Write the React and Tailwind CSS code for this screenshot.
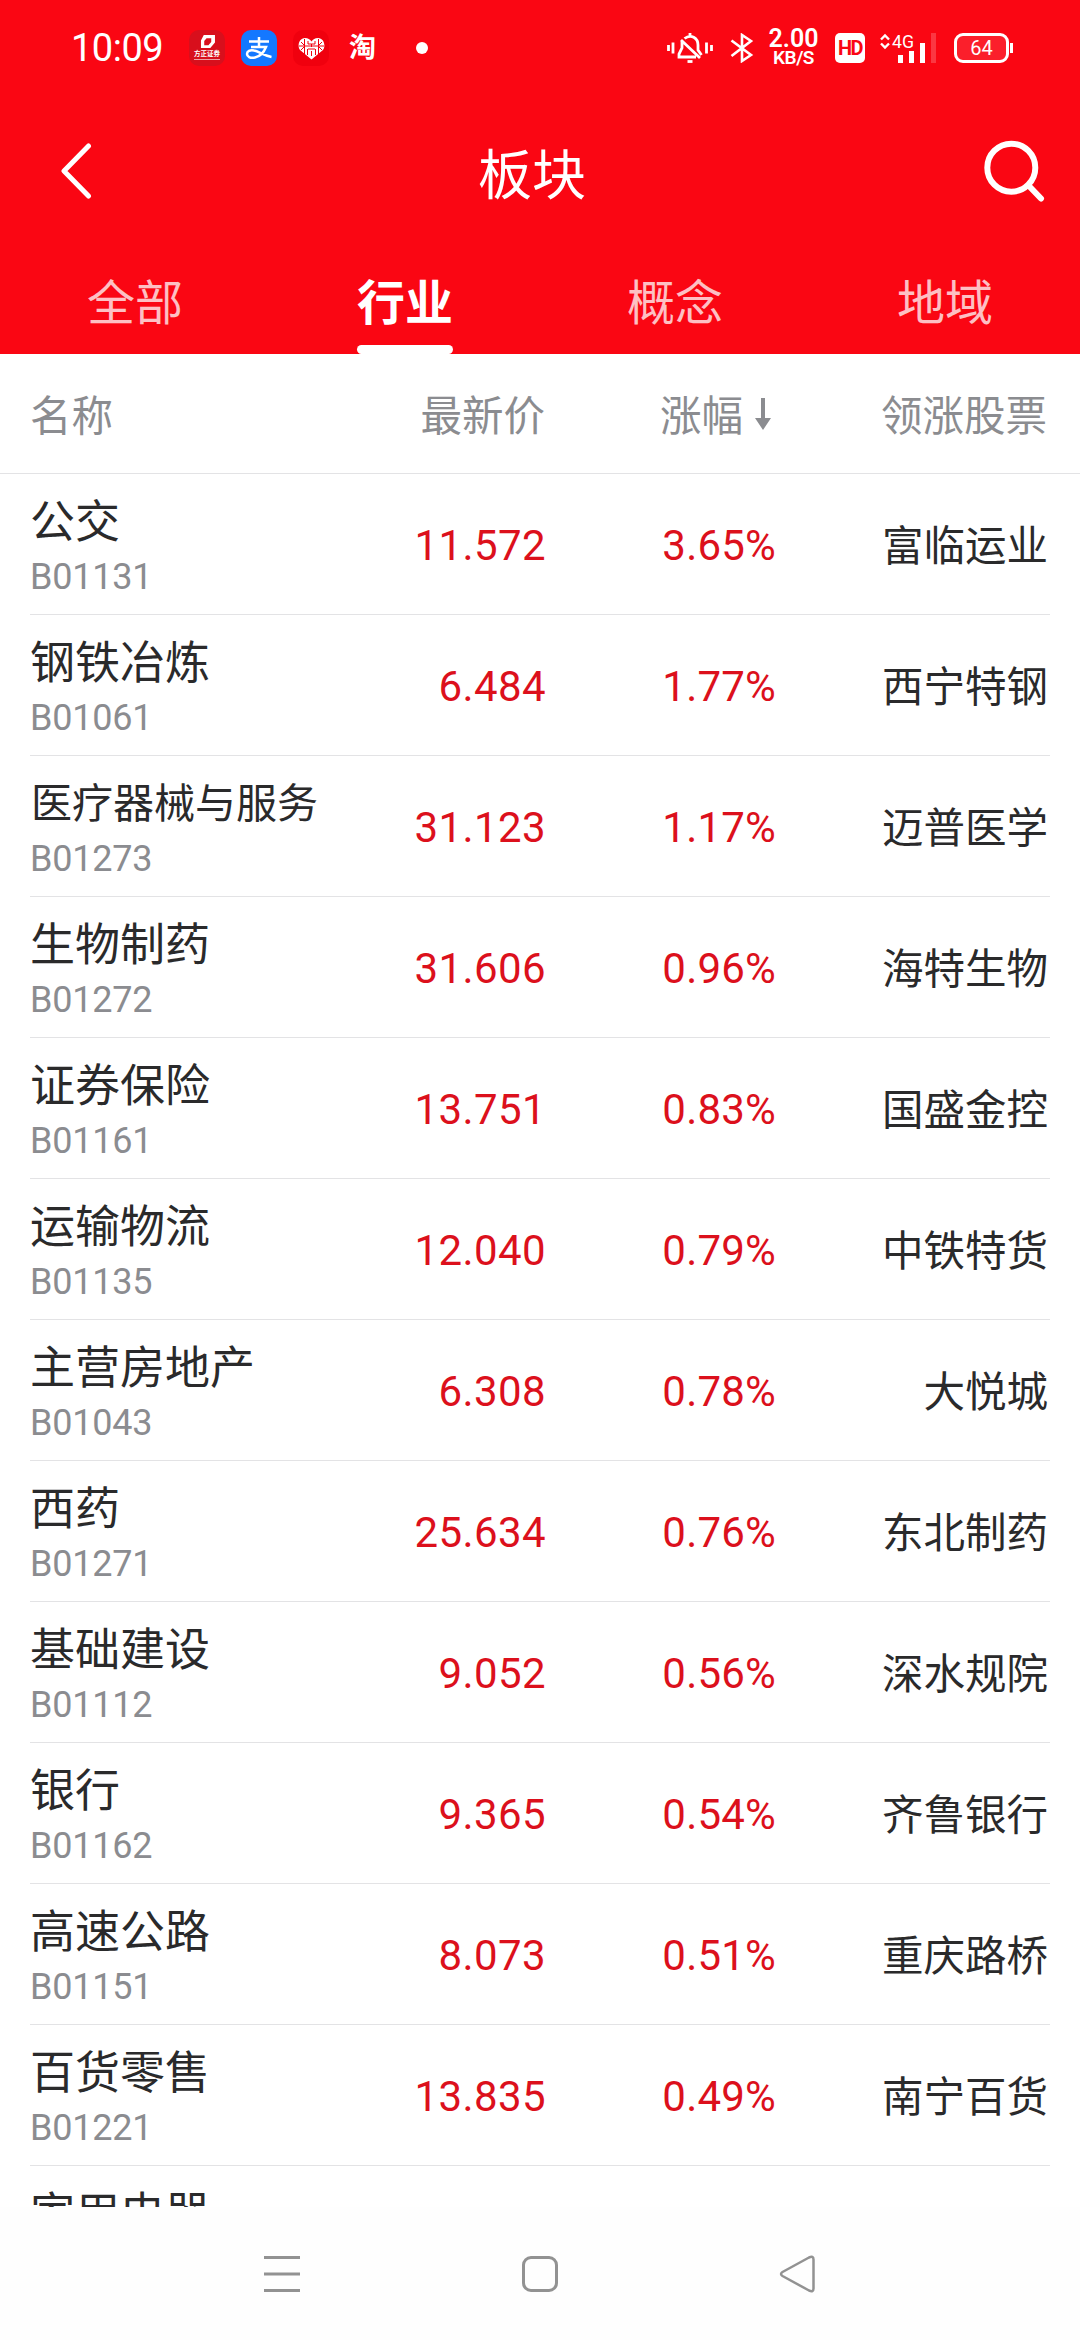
import clsx from 'clsx';

const tabs = ['全部', '行业', '概念', '地域'];

const rows = [
  { name: '公交', code: 'B01131', price: '11.572', change: '3.65%', leader: '富临运业' },
  { name: '钢铁冶炼', code: 'B01061', price: '6.484', change: '1.77%', leader: '西宁特钢' },
  { name: '医疗器械与服务', code: 'B01273', price: '31.123', change: '1.17%', leader: '迈普医学' },
  { name: '生物制药', code: 'B01272', price: '31.606', change: '0.96%', leader: '海特生物' },
  { name: '证券保险', code: 'B01161', price: '13.751', change: '0.83%', leader: '国盛金控' },
  { name: '运输物流', code: 'B01135', price: '12.040', change: '0.79%', leader: '中铁特货' },
  { name: '主营房地产', code: 'B01043', price: '6.308', change: '0.78%', leader: '大悦城' },
  { name: '西药', code: 'B01271', price: '25.634', change: '0.76%', leader: '东北制药' },
  { name: '基础建设', code: 'B01112', price: '9.052', change: '0.56%', leader: '深水规院' },
  { name: '银行', code: 'B01162', price: '9.365', change: '0.54%', leader: '齐鲁银行' },
  { name: '高速公路', code: 'B01151', price: '8.073', change: '0.51%', leader: '重庆路桥' },
  { name: '百货零售', code: 'B01221', price: '13.835', change: '0.49%', leader: '南宁百货' },
  { name: '家用电器' },
];

function StatusBar() {
  return (
    <div className="flex h-24 items-center justify-between pl-[71px] pr-[67px]">
      <div className="flex items-center">
        <span className="w-[118px] text-[38px] leading-none tracking-[-0.5px] whitespace-nowrap">10:09</span>
        {/* Notification icons */}
        <div className="flex h-9 w-9 flex-col items-center rounded-[10px] bg-[#d80f1c] pt-[5px]">
          <svg className="h-[14px] w-[15px]" viewBox="0 0 16 15">
            <path d="M4 0h12v8l-5 6H1V6zM7 3.500 4.500 6.500V11H9l3-3.500v-4z" fill="white" fillRule="evenodd" />
          </svg>
          <span className="mt-[2px] text-[6.500px] font-bold leading-[7px] whitespace-nowrap">方正证券</span>
          <span className="mt-px h-px w-[26px] bg-white/60" />
        </div>
        <div className="ml-4 h-9 w-9 rounded-[10px] bg-[#1478ff]">
          <svg className="h-9 w-9" viewBox="0 0 36 36" fill="none" stroke="white" strokeWidth="2.500">
            <path d="M8 11.500h20M18 7v9.500M10 17h15c-2 5-6 9.500-11 10.500-5 1-8-1-8-3.500s3-4.500 7-3.500c5 1 9 5 17.500 6.500" />
          </svg>
        </div>
        <div className="ml-4 flex h-9 w-9 items-center justify-center rounded-[10px] bg-[#f0000e]">
          <svg className="h-[23px] w-[27px]" viewBox="0 0 27 23">
            <path d="M13.5 22.5 2 13C-1 9 1 1 7 1c3 0 5 1.500 6.500 3.500C15 2.500 17 1 20 1c6 0 8 8 5 12z" fill="white" />
            <path d="M6.500 2v15M20.500 2v15M1 9h25M10 4v3h7V4M10 12h7M13.500 7v3M3 5l3 3M24 5l-3 3M3 13l3-3M24 13l-3-3M9.500 12v6M17.500 12v6M13.500 14v5" fill="none" stroke="#f0000e" strokeWidth="1" />
          </svg>
        </div>
        <span className="ml-[20px] text-[27px] font-bold leading-none">淘</span>
        <span className="ml-[40px] h-3 w-3 rounded-full bg-white" />
      </div>

      <div className="flex items-center">
        <svg className="h-[30px] w-[46px]" viewBox="0 0 46 30" fill="none" stroke="white" strokeWidth="2.800">
          <path d="M1.500 12v6M6 9.500v11M39.500 9.500v11M44.500 12v6" />
          <path d="M15 8v7l-3 6v3h17M17.500 5.500C24 .5 31 5 31 12v5l3.500 5M23 0v4M14 7l19 18" />
          <path d="M20.500 28.500h5" />
        </svg>
        <svg className="ml-[17px] h-[30px] w-6" viewBox="0 0 24 30" fill="none" stroke="white" strokeWidth="2.600">
          <path d="M1.500 7.500 21 22l-9 6V2l9 6L1.500 23" />
        </svg>
        <div className="ml-[14px] flex w-[51px] flex-col items-center font-semibold">
          <span className="text-[25px] leading-[20px]">2.00</span>
          <span className="text-[19px] leading-[18px] tracking-[-0.500px]">KB/S</span>
        </div>
        <div className="ml-4 flex h-[30px] w-[30px] items-center justify-center rounded-[5px] bg-white text-[20px] font-bold tracking-[-1.500px] text-[#fa0613]">HD</div>
        <svg className="ml-[15px] h-[39px] w-[57px]" viewBox="0 -4 57 39">
          <path d="M1 6.500 5 2.500l4 4M1 10.500l4 4 4-4" fill="none" stroke="white" strokeWidth="2.400" />
          <text x="12" y="14.500" fill="white" fontSize="19" textLength="22" lengthAdjust="spacingAndGlyphs">4G</text>
          <path d="M18 22h5v8h-5zM29 18h5v12h-5zM40 10h5v20h-5z" fill="white" />
          <path d="M51 0h5v30h-5z" fill="white" opacity="0.200" />
        </svg>
        <div className="ml-[17px] flex h-[30px] w-[55px] items-center justify-center rounded-[9px] border-[3px] border-white bg-white/10 text-[20px]">64</div>
        <span className="ml-px h-[10px] w-[3px] bg-white" />
      </div>
    </div>
  );
}

function Header() {
  return (
    <header className="flex h-[354px] flex-none flex-col bg-[#fa0613] text-white">
      <StatusBar />
      <div className="grid h-[154px] grid-cols-3 items-center pl-[61px] pr-[35px]">
        <svg className="mb-[6px] h-[58px] w-[62px]" viewBox="0 0 62 58" fill="none" stroke="white" strokeWidth="5" strokeLinecap="round" strokeLinejoin="round">
          <path d="M27.500 5 3 30l24.500 25" />
        </svg>
        <h1 className="mt-[7px] mr-[42px] text-center text-[54px] leading-none">板块</h1>
        <svg className="mb-[4px] h-[62px] w-[62px] justify-self-end" viewBox="0 0 62 62" fill="none" stroke="white" strokeWidth="6" strokeLinecap="round">
          <circle cx="28.300" cy="27.700" r="24" />
          <path d="m46.500 46.500 11.500 12" />
        </svg>
      </div>
      <nav className="grid flex-1 grid-cols-4">
        {tabs.map((tab) => {
          const active = tab === '行业';
          return (
            <div key={tab} className="flex flex-col items-center justify-between">
              <span className={clsx('mt-[28px] text-[48px] leading-[52px]', active ? 'font-bold' : 'text-white/75')}>{tab}</span>
              {active && <span className="h-[9px] w-24 rounded-[5px] bg-white" />}
            </div>
          );
        })}
      </nav>
    </header>
  );
}

function TableHead() {
  return (
    <div className="flex h-[120px] flex-none items-center border-b border-[#e3e3e5] pt-[7px] pl-[30px] pr-[33px] text-[41.500px] leading-none text-[#8b8c90]">
      <span className="w-[290px]">名称</span>
      <span className="w-[225px] text-right">最新价</span>
      <span className="flex w-[227px] items-center justify-end">
        涨幅
        <svg className="mb-[7px] ml-[11px] h-8 w-[18px]" viewBox="0 0 18 32" fill="#8b8c90">
          <path d="M7 0h4v20h6L9 32 1 20h6z" />
        </svg>
      </span>
      <span className="flex-1 text-right">领涨股票</span>
    </div>
  );
}

function Row({ row }) {
  const long = row.name.length > 6;
  return (
    <div className="mx-[30px] flex h-[141px] flex-none items-center border-b border-[#e3e3e5]">
      <div className="h-full w-[290px] whitespace-nowrap">
        <p className={clsx('h-[52px] leading-[52px] text-[#2a2a2b]', long ? 'mt-[22px] mb-[8px] pl-px text-[41px]' : 'mt-[23px] mb-[7px] text-[45px]')}>{row.name}</p>
        <p className="text-[36px] leading-[42px] tracking-[-0.200px] text-[#8b8c90]">{row.code}</p>
      </div>
      <span className="w-[226px] pt-[2px] text-right text-[42px] tracking-[0.400px] text-[#dc101c]">{row.price}</span>
      <span className="w-[230px] pt-[2px] text-right text-[42px] tracking-[0.200px] text-[#dc101c]">{row.change}</span>
      <span className="flex-1 pt-[7px] pr-[2px] text-right text-[41.500px] text-[#2a2a2b]">{row.leader}</span>
    </div>
  );
}

function NavBar() {
  return (
    <div className="flex h-[133px] flex-none items-center justify-center gap-[218px] bg-[#fefefe] pt-px">
      <svg className="h-10 w-10" viewBox="0 0 40 40" fill="none" stroke="#929292" strokeWidth="3">
        <path d="M2 3.500h36M2 20h36M2 36.500h36" />
      </svg>
      <svg className="h-10 w-10" viewBox="0 0 40 40" fill="none" stroke="#929292" strokeWidth="3">
        <rect x="3.500" y="3.500" width="33" height="33" rx="7.500" />
      </svg>
      <svg className="h-10 w-10" viewBox="0 0 40 40" fill="none" stroke="#929292" strokeWidth="2.500" strokeLinejoin="round">
        <path d="M4.500 18 31 3.500q4.500-2 4.500 2v29q0 4-4.500 2L4.500 22q-3-2 0-4z" />
      </svg>
    </div>
  );
}

export default function App() {
  return (
    <div className="flex h-[2340px] w-[1080px] flex-col overflow-hidden bg-white font-[Roboto,'Noto_Sans_CJK_SC',sans-serif]">
      <Header />
      <TableHead />
      <main className="flex h-[1733px] flex-none flex-col overflow-hidden">
        {rows.map((row) => (
          <Row key={row.name} row={row} />
        ))}
      </main>
      <NavBar />
    </div>
  );
}
